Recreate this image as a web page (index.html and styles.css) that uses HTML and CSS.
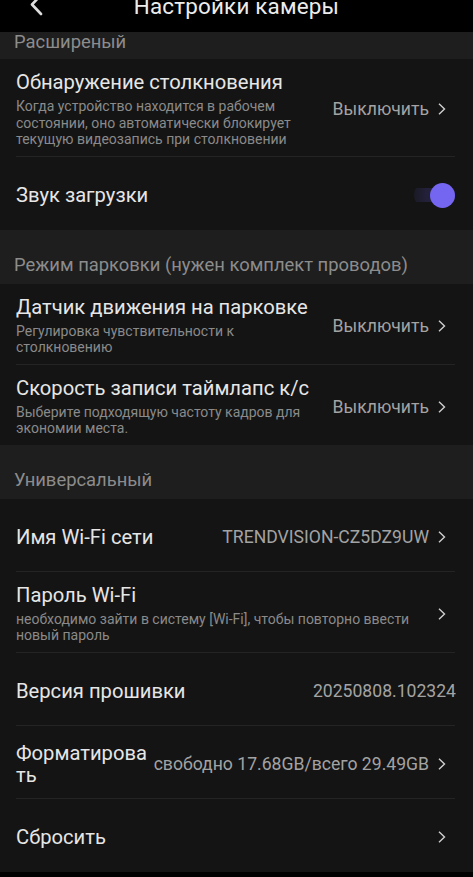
FILE: index.html
```html
<!DOCTYPE html>
<html lang="ru">
<head>
  <meta charset="UTF-8" />
  <meta name="viewport" content="width=device-width, initial-scale=1.0" />
  <title>Настройки камеры</title>
  <link rel="stylesheet" href="styles.css">
</head>
<body>
  <div class="screen">
    <header class="topbar">
      <div class="back">
        <svg width="14" height="22" viewBox="0 0 14 22">
          <path d="M12 0 L3 9.5 L12 19" fill="none" stroke="#dcdcdc" stroke-width="2.6" stroke-linecap="round" stroke-linejoin="round"/>
        </svg>
      </div>
      <h1 class="title">Настройки камеры</h1>
      <div></div>
    </header>

    <div class="section-title section-title--cut">Расширеный</div>
    <div class="group">
      <div class="row">
        <div class="text">
          <div class="name">Обнаружение столкновения</div>
          <div class="desc">Когда устройство находится в рабочем состоянии, оно автоматически блокирует текущую видеозапись при столкновении</div>
        </div>
        <span class="value">Выключить</span>
        <svg class="chev" width="10" height="12" viewBox="0 0 10 12"><path d="M2 0.8 L7.5 6 L2 11.2" fill="none" stroke="#cfcfcf" stroke-width="1.4"/></svg>
      </div>
      <div class="row">
        <div class="text">
          <div class="name">Звук загрузки</div>
        </div>
        <div class="toggle"><span class="knob"></span></div>
      </div>
    </div>

    <div class="section-title">Режим парковки (нужен комплект проводов)</div>
    <div class="group">
      <div class="row">
        <div class="text">
          <div class="name">Датчик движения на парковке</div>
          <div class="desc">Регулировка чувствительности к столкновению</div>
        </div>
        <span class="value">Выключить</span>
        <svg class="chev" width="10" height="12" viewBox="0 0 10 12"><path d="M2 0.8 L7.5 6 L2 11.2" fill="none" stroke="#cfcfcf" stroke-width="1.4"/></svg>
      </div>
      <div class="row">
        <div class="text">
          <div class="name">Скорость записи таймлапс к/с</div>
          <div class="desc">Выберите подходящую частоту кадров для экономии места.</div>
        </div>
        <span class="value">Выключить</span>
        <svg class="chev" width="10" height="12" viewBox="0 0 10 12"><path d="M2 0.8 L7.5 6 L2 11.2" fill="none" stroke="#cfcfcf" stroke-width="1.4"/></svg>
      </div>
    </div>

    <div class="section-title">Универсальный</div>
    <div class="group">
      <div class="row">
        <div class="text">
          <div class="name">Имя Wi-Fi сети</div>
        </div>
        <span class="value">TRENDVISION-CZ5DZ9UW</span>
        <svg class="chev" width="10" height="12" viewBox="0 0 10 12"><path d="M2 0.8 L7.5 6 L2 11.2" fill="none" stroke="#cfcfcf" stroke-width="1.4"/></svg>
      </div>
      <div class="row">
        <div class="text">
          <div class="name">Пароль Wi-Fi</div>
          <div class="desc">необходимо зайти в систему [Wi-Fi], чтобы повторно ввести новый пароль</div>
        </div>
        <svg class="chev" width="10" height="12" viewBox="0 0 10 12"><path d="M2 0.8 L7.5 6 L2 11.2" fill="none" stroke="#cfcfcf" stroke-width="1.4"/></svg>
      </div>
      <div class="row">
        <div class="text">
          <div class="name">Версия прошивки</div>
        </div>
        <span class="value value--end">20250808.102324</span>
      </div>
      <div class="row">
        <div class="text">
          <div class="name name--wrap">Форматировать</div>
        </div>
        <span class="value">свободно 17.68GB/всего 29.49GB</span>
        <svg class="chev" width="10" height="12" viewBox="0 0 10 12"><path d="M2 0.8 L7.5 6 L2 11.2" fill="none" stroke="#cfcfcf" stroke-width="1.4"/></svg>
      </div>
      <div class="row">
        <div class="text">
          <div class="name">Сбросить</div>
        </div>
        <svg class="chev" width="10" height="12" viewBox="0 0 10 12"><path d="M2 0.8 L7.5 6 L2 11.2" fill="none" stroke="#cfcfcf" stroke-width="1.4"/></svg>
      </div>
    </div>
  </div>
</body>
</html>
```

FILE: styles.css
```css
body {
  margin: 0;
  background: #000;
  font-family: Roboto, "Noto Sans", "Liberation Sans", sans-serif;
  color: #e8e8e8;
}
.screen {
  width: 473px;
  height: 877px;
  overflow: hidden;
  background: #000;
}
.topbar {
  height: 32px;
  overflow: hidden;
  display: grid;
  grid-template-columns: 1fr auto 1fr;
  align-items: start;
  background: #000;
}
.back {
  padding-left: 29px;
  margin-top: -5px;
}
.title {
  margin: -5px 0 0;
  font-size: 22.4px;
  line-height: 22px;
  font-weight: 400;
  color: #ececec;
  letter-spacing: 0.2px;
}
.section-title {
  background: #1e1e1e;
  color: #8c8c8c;
  font-size: 18.4px;
  line-height: 20px;
  padding: 25px 14px 9px;
}
.section-title--cut {
  padding-top: 0;
  height: 18px;
}
.group {
  background: #141414;
}
.row {
  margin: 0 18px 0 16px;
  min-height: 73px;
  box-sizing: border-box;
  padding: 12px 0 8px;
  display: flex;
  align-items: center;
  border-bottom: 1px solid #242424;
}
.row:last-child {
  border-bottom: none;
}
.text {
  flex: 1 1 auto;
  min-width: 0;
}
.name {
  font-size: 20.2px;
  line-height: 22px;
  color: #e6e6e6;
}
.name--wrap {
  overflow-wrap: anywhere;
}
.desc {
  margin-top: 5px;
  font-size: 14px;
  line-height: 16.5px;
  color: #8a8a8a;
  padding-right: 10px;
}
.value {
  flex: none;
  margin-left: 3px;
  font-size: 17.6px;
  color: #a3a3a3;
}
.value--end {
  margin-right: -1px;
}
.chev {
  flex: none;
  margin-left: 8px;
  margin-right: 8px;
}
.toggle {
  flex: none;
  width: 41px;
  height: 26px;
  display: flex;
  align-items: center;
  justify-content: flex-end;
  border-radius: 13px;
  background: linear-gradient(to right, #1a1a24 0, #23203a 30%, #23203a 100%);
  background-size: 100% 14px;
  background-repeat: no-repeat;
  background-position: center;
}
.knob {
  width: 25px;
  height: 25px;
  border-radius: 50%;
  background: #7466f0;
}
```
